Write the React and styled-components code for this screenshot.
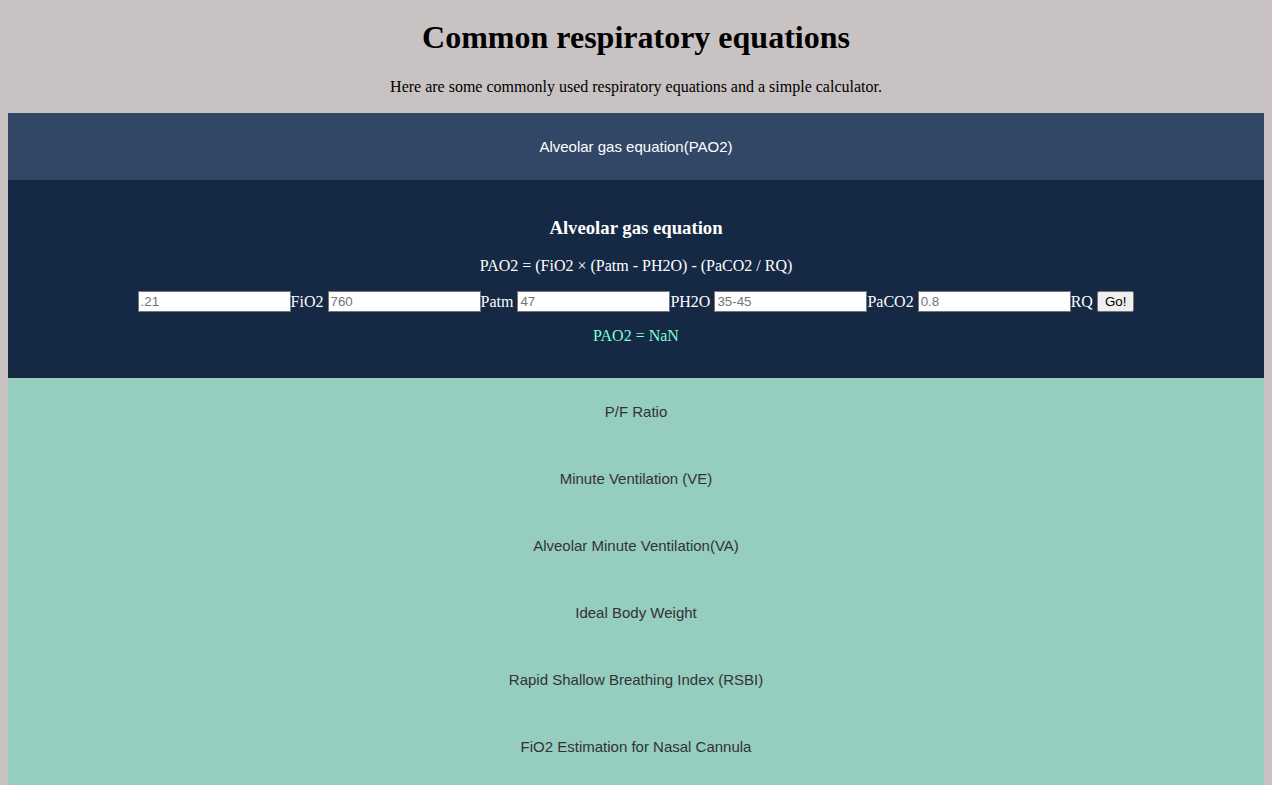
import React, { useState } from "react";
import styled, { createGlobalStyle } from "styled-components";

const GlobalStyle = createGlobalStyle`
  html {
    background: #c8c2c2;
  }
  body {
    margin: 0;
    padding: 0 8px;
    background: #c8c2c2;
    font-family: "Liberation Serif", "Times New Roman", serif;
    color: #000;
  }
`;

const Page = styled.div`
  display: flex;
  flex-direction: column;
  text-align: center;
`;

const Title = styled.h1`
  margin: 0;
  padding-top: 19px;
  font-size: 32px;
  line-height: 37px;
  font-weight: bold;
`;

const Intro = styled.p`
  margin: 22px 0 17px;
  font-size: 16px;
  line-height: 18px;
`;

const Tab = styled.div`
  height: 67px;
  display: flex;
  align-items: center;
  justify-content: center;
  background: ${p => (p.open ? "#324766" : "#95cdbf")};
  color: ${p => (p.open ? "#fff" : "#333")};
  font-family: "Liberation Sans", Arial, sans-serif;
  font-size: 15px;
  cursor: pointer;
`;

const Panel = styled.div`
  background: #152844;
  color: #fff;
  padding: 19px 0 33px;
`;

const PanelTitle = styled.h3`
  margin: 18px 0 18px;
  font-size: 18.72px;
  line-height: 22px;
  font-weight: bold;
`;

const Formula = styled.p`
  margin: 0 0 16px;
  font-size: 16px;
  line-height: 18px;
`;

const InputRow = styled.div`
  display: flex;
  align-items: center;
  justify-content: center;
  height: 21px;
  font-size: 16px;
`;

const Field = styled.input`
  box-sizing: border-box;
  width: 153px;
  height: 21px;
  margin: 0;
  padding: 1px 2px;
  border: 1px solid #767676;
  background: #fff;
  font-family: "Liberation Sans", Arial, sans-serif;
  font-size: 13.33px;
  color: #000;
  &::placeholder {
    color: #757575;
  }
`;

const Label = styled.span`
  margin-right: 4px;
`;

const GoButton = styled.button`
  box-sizing: border-box;
  height: 21px;
  padding: 1px 7px;
  margin: 0;
  border: 1px solid #767676;
  border-radius: 2px;
  background: #efefef;
  font-family: "Liberation Sans", Arial, sans-serif;
  font-size: 13.33px;
  color: #000;
`;

const Result = styled.p`
  margin: 15px 0 0;
  font-size: 16px;
  line-height: 18px;
  color: #7fffd4;
`;

const List = styled.div`
  background: #95cdbf;
  padding-bottom: 20px;
`;

const fields = [
  { ph: ".21", label: "FiO2" },
  { ph: "760", label: "Patm" },
  { ph: "47", label: "PH2O" },
  { ph: "35-45", label: "PaCO2" },
  { ph: "0.8", label: "RQ" }
];

const others = [
  "P/F Ratio",
  "Minute Ventilation (VE)",
  "Alveolar Minute Ventilation(VA)",
  "Ideal Body Weight",
  "Rapid Shallow Breathing Index (RSBI)",
  "FiO2 Estimation for Nasal Cannula"
];

const App = () => {
  const [vals, setVals] = useState(["", "", "", "", ""]);
  const [result, setResult] = useState(NaN);

  const calc = () => {
    const [fio2, patm, ph2o, paco2, rq] = vals.map(v => parseFloat(v));
    setResult(fio2 * (patm - ph2o) - paco2 / rq);
  };

  return (
    <>
      <GlobalStyle />
      <Page>
        <Title>Common respiratory equations</Title>
        <Intro>
          Here are some commonly used respiratory equations and a simple
          calculator.
        </Intro>
        <Tab open>Alveolar gas equation(PAO2)</Tab>
        <Panel>
          <PanelTitle>Alveolar gas equation</PanelTitle>
          <Formula>PAO2 = (FiO2 × (Patm - PH2O) - (PaCO2 / RQ)</Formula>
          <InputRow>
            {fields.map((f, i) => (
              <React.Fragment key={f.label}>
                <Field
                  placeholder={f.ph}
                  value={vals[i]}
                  onChange={e => {
                    const next = [...vals];
                    next[i] = e.target.value;
                    setVals(next);
                  }}
                />
                <Label>{f.label}</Label>
              </React.Fragment>
            ))}
            <GoButton onClick={calc}>Go!</GoButton>
          </InputRow>
          <Result>PAO2 = {String(result)}</Result>
        </Panel>
        <List>
          {others.map(t => (
            <Tab key={t}>{t}</Tab>
          ))}
        </List>
      </Page>
    </>
  );
};

export default App;
